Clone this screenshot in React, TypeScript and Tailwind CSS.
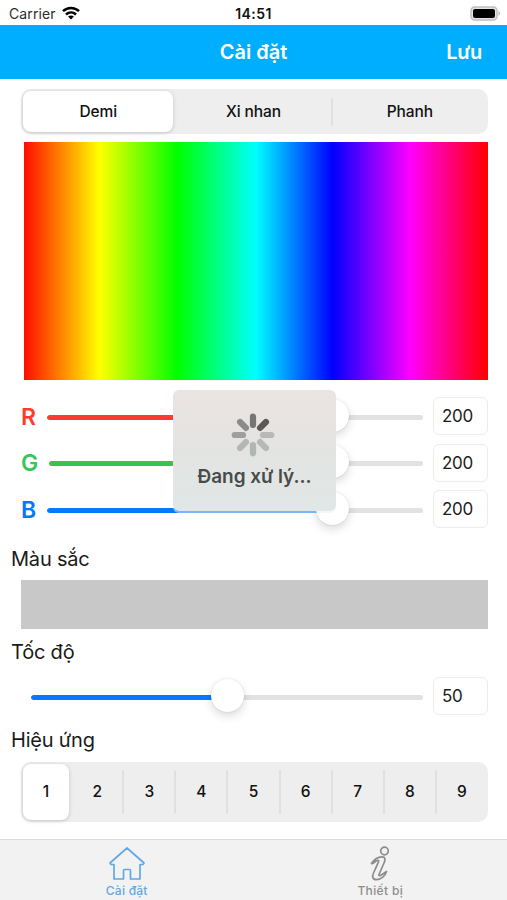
import { useState } from "react";

type SliderProps = {
  value: number;
  max: number;
  color: string;
};

function Slider({ value, max, color }: SliderProps) {
  const percent = value / max;

  return (
    <div className="relative h-[33px] flex-1 flex items-center">
      <div className="w-full h-[5px] rounded-full bg-[#e2e2e2] overflow-hidden mt-[2px]">
        <div
          className={`h-full rounded-full ${color}`}
          style={{ width: `${percent * 100}%` }}
        />
      </div>
      <div
        className="absolute -top-px w-[33px] h-[33px] rounded-full bg-white shadow-[0_4px_10px_rgba(0,0,0,0.15),0_0_2px_rgba(0,0,0,0.12)]"
        style={{ left: `calc((100% - 33px) * ${percent})` }}
      />
    </div>
  );
}

function ValueBox({ value }: { value: number }) {
  return (
    <div className="w-[55px] h-[38px] ml-[10px] pl-[8px] pt-[2px] flex items-center rounded-[6px] border border-[#ececec] bg-white text-[17px] tracking-[-0.35px] text-[#1c1c1c]">
      {value}
    </div>
  );
}

type SegmentedProps = {
  items: string[];
  className: string;
  dividerClass: string;
};

function Segmented({ items, className, dividerClass }: SegmentedProps) {
  const [active, setActive] = useState(0);

  return (
    <div className={`flex rounded-[10px] bg-[#eeeeee] py-[2px] pl-[2px] ${className}`}>
      {items.map((item, i) => (
        <button
          key={item}
          onClick={() => setActive(i)}
          className={`relative grow flex items-center justify-center text-[#111111] ${
            i === active
              ? "w-0 mr-[2px] rounded-[8px] bg-white shadow-[0_1px_4px_rgba(0,0,0,0.18)]"
              : "w-[6px]"
          }`}
        >
          <span className="shrink-0 whitespace-nowrap">{item}</span>
          {i !== active && i < items.length - 1 && (
            <span
              className={`absolute right-0 w-[2px] rounded-full bg-[#e0e0e0] ${dividerClass}`}
            />
          )}
        </button>
      ))}
    </div>
  );
}

const channels = [
  { label: "R", text: "text-[#ff3b30]", bar: "bg-[#fb3b30]", width: "w-[26px]" },
  { label: "G", text: "text-[#34c759]", bar: "bg-[#32c455]", width: "w-[28px]" },
  { label: "B", text: "text-[#007aff]", bar: "bg-[#067aff]", width: "w-[26px]" },
];

// Spinner spokes, clockwise from the top
const spokes = ["#777573", "#5b5a58", "#b9b8b6", "#b5b8b6", "#b1b5b4", "#b3b6b4", "#a09f9e", "#8d8b89"];

function Loading() {
  return (
    <div className="absolute left-[173px] top-[390px] w-[163px] h-[121px] rounded-[6px] flex flex-col items-center bg-linear-to-b from-[#eae4e2] via-[#e3e4e2] to-[#e0e7e6] shadow-[0_2px_0_rgba(235,240,240,0.5)]">
      <svg className="mt-[23px] w-[44px] h-[44px] mr-[3px]" viewBox="-22 -22 44 44">
        {spokes.map((color, i) => (
          <line
            key={i}
            x1="0"
            y1="-10"
            x2="0"
            y2="-18.3"
            stroke={color}
            strokeWidth="6.2"
            strokeLinecap="round"
            transform={`rotate(${i * 45})`}
          />
        ))}
      </svg>
      <div className="mt-[5px] text-[19px] leading-[30px] font-semibold tracking-[-0.05px] text-[#494b4a] whitespace-nowrap">
        Đang xử lý...
      </div>
    </div>
  );
}

function StatusBar() {
  return (
    <div className="h-[25px] px-[9px] pt-[2px] flex items-center justify-between text-[14px] text-[#111111]">
      <div className="flex-1 flex items-center gap-[6px]">
        <span className="text-[#2c2c2c] tracking-[0.1px]">Carrier</span>
        <svg className="w-[18px] h-[14px] -mt-px" viewBox="0 0 18 14" fill="none" stroke="#000" strokeWidth="2.5">
          <path d="M1 5.2C5.5 .8 12.5 .8 17 5.2" />
          <path d="M4 8.5C6.9 5.8 11.1 5.8 14 8.5" />
          <path d="M9 13.5L6.1 10.6C7.8 9 10.2 9 11.9 10.6Z" fill="#000" stroke="none" />
        </svg>
      </div>
      <span className="font-semibold tracking-[0.4px]">14:51</span>
      <div className="flex-1 flex justify-end">
        <svg className="w-[31px] h-[15px] -mr-[3px] -mt-px" viewBox="0 0 31 15">
          <rect x="1" y="1" width="26" height="13" rx="3.8" fill="#e4e4e4" stroke="#bdbdbd" strokeWidth="1.4" />
          <rect x="3" y="3" width="22" height="9" rx="2" fill="#000" />
          <path d="M28.5 5v5c1.8-.7 1.8-4.3 0-5z" fill="#adadad" />
        </svg>
      </div>
    </div>
  );
}

function TabBar() {
  return (
    <div className="h-[61px] flex border-t border-[#dcdcdc] bg-[#f2f2f2] text-[12px] font-medium leading-[14px]">
      <div className="flex-1 flex flex-col items-center pt-[6px] text-[#62a8e5]">
        <svg className="w-[38px] h-[36px]" viewBox="0 0 38 36" fill="none" stroke="currentColor" strokeWidth="1.7" strokeLinejoin="round">
          <path d="M19 2L2 17L3 18.5H6V33H15.5V24.5Q15.5 23.5 16.5 23.5H21.5Q22.5 23.5 22.5 24.5V33H32V18.5H35L36 17Z" />
        </svg>
        <span className="mt-[2px] tracking-[0.25px]">Cài đặt</span>
      </div>
      <div className="flex-1 flex flex-col items-center pt-[6px] text-[#8d8d8d]">
        <svg className="w-[20px] h-[36px]" viewBox="0 0 20 36" fill="none" stroke="currentColor" strokeWidth="1.7" strokeLinejoin="round" strokeLinecap="round">
          <circle cx="14.5" cy="5" r="3.8" />
          <path d="M1.5 17.5C4 13.5 8 10.8 12 10.8C15.5 10.8 15.5 13.5 14 17L9 28.5C8.5 30.2 10 30 12 28.5L16.5 25.5C15.5 29.5 11 33.6 6.5 33.6C2.5 33.6 1.8 30.5 3.5 27L8.5 15.8C9.2 14 7.5 14 6 15C4.5 16 3 18.5 1.5 17.5Z" />
        </svg>
        <span className="mt-[2px] tracking-[0.35px]">Thiết bị</span>
      </div>
    </div>
  );
}

function App() {
  return (
    <div className="relative w-[507px] h-[900px] overflow-hidden flex flex-col bg-white font-['Inter','Liberation_Sans',sans-serif]">
      <StatusBar />

      <header className="h-[54px] px-[25px] flex items-center bg-[#00aeff] text-white text-[20px] font-semibold">
        <div className="flex-1" />
        <h1>Cài đặt</h1>
        <div className="flex-1 text-right tracking-[-0.2px]">Lưu</div>
      </header>

      <main className="flex-1 flex flex-col pl-[21px] pr-[19px]">
        <Segmented
          items={["Demi", "Xi nhan", "Phanh"]}
          className="mt-[10px] h-[45px] text-[15.5px] font-medium tracking-[-0.1px]"
          dividerClass="h-[28px] -mr-px"
        />

        {/* Color picker */}
        <div className="mt-[8px] ml-[3px] h-[238px] bg-[linear-gradient(to_right,#ff0c00,#ffff00_16.2%,#00ff00_33%,#00ffff_50%,#0000ff_66.5%,#ff00ff_83.2%,#ff0000)]" />

        <div className="mt-[17px] flex flex-col gap-[8.5px]">
          {channels.map((c) => (
            <div key={c.label} className="h-[38px] flex items-center">
              <span className={`text-[23px] font-semibold pt-[2px] ${c.text} ${c.width}`}>
                {c.label}
              </span>
              <Slider value={200} max={255} color={c.bar} />
              <ValueBox value={200} />
            </div>
          ))}
        </div>

        <h2 className="-ml-[10px] mt-[18px] h-[26px] leading-[26px] text-[20px] tracking-[-0.2px] text-[#1a1a1a]">
          Màu sắc
        </h2>
        <div className="mt-[8px] h-[49px] bg-[#c8c8c8]" />

        <h2 className="-ml-[10px] mt-[10px] h-[26px] leading-[26px] text-[20px] tracking-[-0.2px] text-[#1a1a1a]">
          Tốc độ
        </h2>
        <div className="mt-[12px] h-[38px] pl-[10px] flex items-center">
          <Slider value={50} max={100} color="bg-[#067aff]" />
          <ValueBox value={50} />
        </div>

        <h2 className="-ml-[10px] mt-[12px] h-[26px] leading-[26px] text-[20px] tracking-[-0.2px] text-[#1a1a1a]">
          Hiệu ứng
        </h2>
        <Segmented
          items={["1", "2", "3", "4", "5", "6", "7", "8", "9"]}
          className="mt-[9px] h-[60px] text-[15.5px] font-medium"
          dividerClass="h-[44px] -mr-px"
        />
      </main>

      <TabBar />
      <Loading />
    </div>
  );
}

export default App;
